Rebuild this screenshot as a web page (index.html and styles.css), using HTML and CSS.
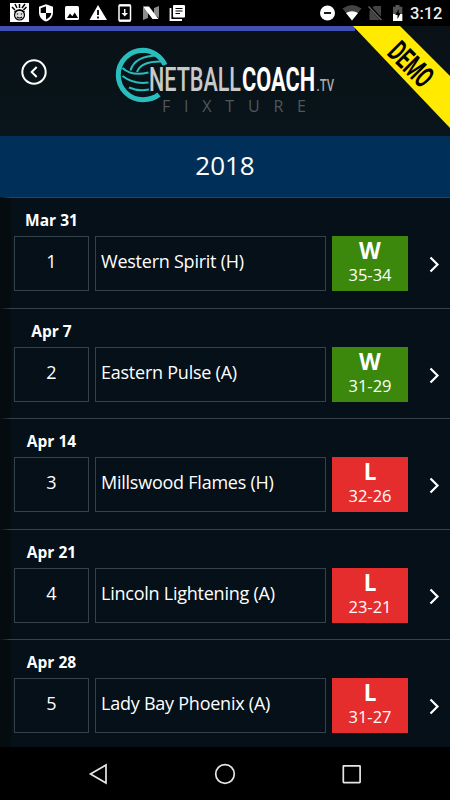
FILE: index.html
```html
<!DOCTYPE html>
<html lang="en">
<head>
    <meta charset="UTF-8">
    <meta name="viewport" content="width=device-width, initial-scale=1.0">
    <title>Fixture</title>
    <link rel="stylesheet" href="styles.css">
</head>
<body>
    <div class="status-bar">
        <svg class="status-left" width="190" height="26" viewBox="0 0 190 26">
            <rect x="10" y="3" width="19" height="19" fill="#fff"/>
            <path d="M15 10l-3-3M17 8l-2-4M19.500 8V4M22 8l3-4M23.500 10l3-3" stroke="#000" stroke-width="1.5"/>
            <circle cx="19.5" cy="15" r="5" fill="#ddd" stroke="#000" stroke-width="1.2"/>
            <path d="M14.500 12q5-4 10 0" fill="none" stroke="#000" stroke-width="1.6"/>
            <path d="M17 17q2.500 2 5 0M16.800 14h1.400M20.800 14h1.400" fill="none" stroke="#000" stroke-width="1.100"/>
            <path d="M46 4.200l7 2.600v5.700c0 4.500-3 7.600-7 9-4-1.400-7-4.500-7-9V6.800z" fill="#fff"/>
            <path d="M46 6.200v6.800h5.300c-.4 3.100-2.400 5.200-5.300 6.400V13h-5.300V8.200z" fill="#000"/>
            <rect x="65" y="6" width="14" height="14" rx="1.500" fill="#fff"/>
            <path d="M67 18l3-4.500 2.300 2.700 2.400-3.700L78 18z" fill="#000"/>
            <path d="M98 5l9 15H89.500z" fill="#fff"/>
            <path d="M98 10v5M98 16.500v2" stroke="#000" stroke-width="1.800"/>
            <rect x="119" y="5" width="11.500" height="16" rx="1" fill="none" stroke="#fff" stroke-width="1.500"/>
            <path d="M119 5.500h11.500M119 20.500h11.500" stroke="#fff" stroke-width="2"/>
            <path d="M124.700 9v5" stroke="#fff" stroke-width="1.500"/>
            <path d="M121.500 13h6.500l-3.250 3.500z" fill="#fff"/>
            <path d="M143 7l5 4v7l-5 2zM159 6v12l-5-4V8z" fill="#8c8c8c"/>
            <path d="M143 6.500h6l9.500 12.500h-6z" fill="#fff"/>
            <rect x="173" y="5" width="12" height="12.500" rx="1" fill="#fff"/>
            <path d="M175.500 8.500h7M175.500 11h7M175.500 13.500h4.500" stroke="#000" stroke-width="1.200"/>
            <path d="M170.500 8v12H182" fill="none" stroke="#fff" stroke-width="1.800"/>
        </svg>
        <svg class="status-right" width="92" height="26" viewBox="0 0 92 26">
            <circle cx="9.500" cy="13" r="7.500" fill="#fff"/>
            <path d="M6 13h7" stroke="#000" stroke-width="1.800"/>
            <path d="M24.500 8.500q9.500-7 19 0L34 20.500z" fill="#444"/>
            <path d="M28 13q6-3.500 12 0l-6 7.500z" fill="#fff"/>
            <path d="M56 6h7v14H51.500v-9z" fill="#444"/>
            <path d="M50.500 5.500l14 15" stroke="#000" stroke-width="3"/>
            <path d="M50.500 6.500l13 13.500" stroke="#666" stroke-width="1.200"/>
            <path d="M77.500 5h4v1.800h2.800V21H75V6.800h2.500z" fill="#555"/>
            <path d="M75 14h9.300v7H75z" fill="#fff"/>
            <path d="M80.700 9l-3.500 6h2.300v4l3.200-6h-2z" fill="#000"/>
        </svg>
        <span class="clock">3:12</span>
    </div>

    <header class="header">
        <div class="progress"></div>
        <div class="header-row">
            <svg class="back" width="26" height="26" viewBox="0 0 26 26">
                <circle cx="13" cy="13" r="11.700"/>
                <path d="M15.700 8l-5 5 5 5"/>
            </svg>
            <div class="brand">
                <svg class="logo" width="220" height="56" viewBox="0 0 220 56">
                    <path d="M49 18A24.700 24.700 0 0 0 27 3.300A24.700 24.700 0 0 0 27 52.700Q37 52.500 43 47.500" class="ball-edge"/>
                    <path d="M6.500 21q9 8.500 26 4.500M6.500 29q11 8.500 26 6.500M13 40.500q9 4 20 2" class="ball-line"/>
                    <path d="M14.500 23.500Q19 8 44 8.500M21 25Q25 14 46 14.500" class="ball-line"/>
                    <text x="33" y="44" class="logo-light" textLength="92" lengthAdjust="spacingAndGlyphs">NETBALL</text>
                    <text x="126" y="44" class="logo-bold" textLength="73" lengthAdjust="spacingAndGlyphs">COACH</text>
                    <text x="200.500" y="44" class="logo-tv" textLength="17.500" lengthAdjust="spacingAndGlyphs">.TV</text>
                </svg>
                <div class="subtitle">FIXTURE</div>
            </div>
        </div>
        <svg class="ribbon" width="97" height="103" viewBox="0 0 97 103">
            <path d="M0 0h47l50 50v52z" fill="#ffea00"/>
            <text transform="translate(33 28) rotate(45)" textLength="50" lengthAdjust="spacingAndGlyphs">DEMO</text>
        </svg>
    </header>

    <h1 class="season">2018</h1>

    <main class="fixtures">
        <section class="match">
            <div class="date">Mar 31</div>
            <div class="match-row">
                <div class="round">1</div>
                <div class="team">Western Spirit (H)</div>
                <div class="result win"><b>W</b><span>35-34</span></div>
                <svg class="arrow" width="11" height="17" viewBox="0 0 11 17"><path d="M1.500 1.500l7 7-7 7"/></svg>
            </div>
        </section>
        <section class="match">
            <div class="date">Apr 7</div>
            <div class="match-row">
                <div class="round">2</div>
                <div class="team">Eastern Pulse (A)</div>
                <div class="result win"><b>W</b><span>31-29</span></div>
                <svg class="arrow" width="11" height="17" viewBox="0 0 11 17"><path d="M1.500 1.500l7 7-7 7"/></svg>
            </div>
        </section>
        <section class="match">
            <div class="date">Apr 14</div>
            <div class="match-row">
                <div class="round">3</div>
                <div class="team">Millswood Flames (H)</div>
                <div class="result loss"><b>L</b><span>32-26</span></div>
                <svg class="arrow" width="11" height="17" viewBox="0 0 11 17"><path d="M1.500 1.500l7 7-7 7"/></svg>
            </div>
        </section>
        <section class="match">
            <div class="date">Apr 21</div>
            <div class="match-row">
                <div class="round">4</div>
                <div class="team">Lincoln Lightening (A)</div>
                <div class="result loss"><b>L</b><span>23-21</span></div>
                <svg class="arrow" width="11" height="17" viewBox="0 0 11 17"><path d="M1.500 1.500l7 7-7 7"/></svg>
            </div>
        </section>
        <section class="match">
            <div class="date">Apr 28</div>
            <div class="match-row">
                <div class="round">5</div>
                <div class="team">Lady Bay Phoenix (A)</div>
                <div class="result loss"><b>L</b><span>31-27</span></div>
                <svg class="arrow" width="11" height="17" viewBox="0 0 11 17"><path d="M1.500 1.500l7 7-7 7"/></svg>
            </div>
        </section>
    </main>

    <nav class="nav-bar">
        <svg width="22" height="22" viewBox="0 0 22 22"><path d="M19 2v18L3.500 11z"/></svg>
        <svg width="22" height="22" viewBox="0 0 22 22"><circle cx="11" cy="11" r="9.300"/></svg>
        <svg width="22" height="22" viewBox="0 0 22 22"><rect x="2.300" y="2.800" width="16.800" height="16.800" rx="0.500"/></svg>
    </nav>
</body>
</html>
```

FILE: styles.css
```css
* {
    box-sizing: border-box;
}
body {
    margin: 0;
    width: 450px;
    height: 800px;
    overflow: hidden;
    display: flex;
    flex-direction: column;
    background-color: #051018;
    color: #fff;
    font-family: "Open Sans", "Noto Sans", sans-serif;
}
svg {
    display: block;
    overflow: visible;
}
.status-bar {
    display: flex;
    height: 26px;
    flex: none;
    background-color: #000;
}
.status-right {
    margin-left: 128px;
}
.clock {
    font-family: Roboto, sans-serif;
    font-size: 16.5px;
    font-weight: 500;
    line-height: 28px;
    color: #eee;
}
.header {
    position: relative;
    height: 109.5px;
    flex: none;
    background: linear-gradient(#091117, #08151a);
}
.progress {
    width: 355px;
    height: 5px;
    background-color: #3f51b5;
}
.header-row {
    display: flex;
    padding-left: 21px;
}
.back {
    margin-top: 27.5px;
    fill: none;
    stroke: #fff;
    stroke-width: 2;
}
.brand {
    margin: 16px 0 0 69px;
}
.ball-edge {
    fill: none;
    stroke: #29bdbd;
    stroke-width: 5;
}
.ball-line {
    fill: none;
    stroke: #29bdbd;
    stroke-width: 2;
}
.logo text {
    font-family: Roboto, sans-serif;
    font-size: 33px;
}
.logo .logo-light {
    fill: #c9c9c9;
    font-weight: 500;
    stroke: #08131a;
    stroke-width: 3;
    paint-order: stroke;
}
.logo .logo-bold {
    fill: #fff;
    font-weight: 700;
}
.logo .logo-tv {
    fill: #aaa;
    font-size: 17px;
    font-weight: 500;
}
.subtitle {
    margin: -8px 0 0 46px;
    font-size: 16px;
    line-height: 22px;
    letter-spacing: 13.8px;
    color: #50565a;
}
.ribbon {
    position: absolute;
    top: 0;
    right: 0;
}
.ribbon text {
    font-family: Roboto, sans-serif;
    font-size: 30px;
    font-weight: 700;
    fill: #000;
}
.season {
    margin: 0;
    height: 61.5px;
    flex: none;
    background-color: #002f59;
    font-size: 26px;
    font-weight: 400;
    line-height: 58px;
    text-align: center;
}
.fixtures {
    flex: 1;
    min-height: 0;
    overflow: hidden;
    background: linear-gradient(90deg, #040c0f 11px, #051018 11px);
}
.match {
    height: 110.5px;
    padding: 13px 10px 0 14px;
    background: linear-gradient(90deg, transparent, #36424b 10px) no-repeat top / 100% 1px;
}
.date {
    width: 75px;
    height: 26px;
    font-size: 15.5px;
    font-weight: 700;
    line-height: 20px;
    text-align: center;
}
.match-row {
    display: flex;
    gap: 6px;
    height: 55px;
}
.round, .team {
    border: 1px solid #36424b;
    font-size: 18px;
    line-height: 49px;
}
.round {
    width: 75px;
    text-align: center;
}
.team {
    width: 231px;
    padding-left: 5px;
    letter-spacing: -0.24px;
    white-space: nowrap;
}
.result {
    width: 76px;
    display: flex;
    flex-direction: column;
    align-items: center;
}
.result b {
    font-size: 22.5px;
    line-height: 29px;
}
.result span {
    font-size: 16.5px;
    line-height: 19px;
}
.win {
    background-color: #3b880d;
}
.loss {
    background-color: #e52d2d;
}
.arrow {
    margin: 20px 0 0 auto;
    fill: none;
    stroke: #fff;
    stroke-width: 2.2;
}
.nav-bar {
    display: flex;
    justify-content: space-between;
    height: 53px;
    flex: none;
    padding: 16px 87px 0;
    background-color: #000;
}
.nav-bar svg {
    fill: none;
    stroke: #e6e6e6;
    stroke-width: 1.7;
}
```
